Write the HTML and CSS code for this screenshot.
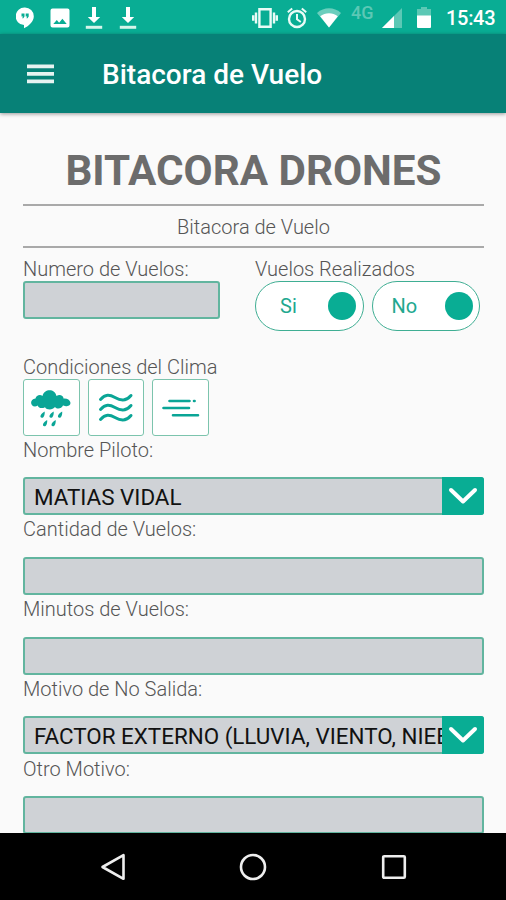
FILE: index.html
```
<!DOCTYPE html>
<html lang="es">
<head>
    <meta charset="UTF-8">
    <meta name="viewport" content="width=device-width, initial-scale=1.0">
    <title>Bitacora de Vuelo</title>
    <link rel="stylesheet" href="styles.css">
</head>
<body>
    <div class="status-bar">
        <div class="status-left">
            <svg width="18" height="22" viewBox="0 0 18 22">
                <path fill="#fff" fill-rule="evenodd" d="M9 .5a8.8 8.8 0 0 0-1 17.6v3.2c5-2.300 9.800-6.800 9.800-12A8.800 8.800 0 0 0 9 .5zM5.500 6.500h3v3L7.300 11.300H6.200l.8-1.800H5.500zM9.700 6.500h3v3l-1.200 1.800h-1.100l.8-1.800H9.700z"/>
            </svg>
            <svg width="20" height="20" viewBox="0 0 20 20">
                <path fill="#fff" fill-rule="evenodd" d="M2.500 .5h15a2 2 0 0 1 2 2v15a2 2 0 0 1-2 2h-15a2 2 0 0 1-2-2v-15a2 2 0 0 1 2-2zM3.300 16h13.400l-4.300-5.300-3.300 4-2.300-2.700z"/>
            </svg>
            <svg width="18" height="24" viewBox="0 0 18 24">
                <path fill="#fff" d="M7 1h4v10h4.200L9 17 2.800 11H7z"/>
                <path fill="#d5f5ea" d="M.8 19.800h16.400v3H.8z"/>
            </svg>
            <svg width="18" height="24" viewBox="0 0 18 24">
                <path fill="#fff" d="M7 1h4v10h4.200L9 17 2.800 11H7z"/>
                <path fill="#d5f5ea" d="M.8 19.800h16.400v3H.8z"/>
            </svg>
        </div>
        <div class="status-right">
            <svg class="vibrate" width="26" height="22" viewBox="0 0 26 22">
                <path fill="none" stroke="#e9fbf6" stroke-width="2.400" d="M7.400 2.200h11.200v17.600H7.400zM4 5.500v11M22 5.500v11M1.200 8.200v5.600M24.800 8.200v5.600"/>
            </svg>
            <svg class="alarm" width="20" height="22" viewBox="0 0 20 22">
                <circle cx="10" cy="12" r="8" fill="none" stroke="#e9fbf6" stroke-width="2.400"/>
                <path fill="none" stroke="#e9fbf6" stroke-width="2" d="M.8 5.200l4.400-3.800M19.200 5.200l-4.400-3.800M10 7v5.300l3.800 2.700"/>
            </svg>
            <svg class="wifi" width="24" height="20" viewBox="0 0 24 20">
                <path fill="#6bcebd" d="M0 5C7-1.200 17-1.200 24 5L12 19.500z"/>
                <path fill="#fff" d="M3.200 8.300c5-4.200 12.600-4.200 17.600 0L12 19.500z"/>
            </svg>
            <span class="network">4G</span>
            <svg class="signal" width="20" height="20" viewBox="0 0 20 20">
                <path fill="#5cc8b5" d="M20 0v20H0z"/>
                <path fill="#fff" d="M12 8v12H0z"/>
            </svg>
            <svg class="battery" width="14" height="21" viewBox="0 0 14 21">
                <path fill="#5cc8b5" d="M4 0h6v2h4v8H0V2h4z"/>
                <path fill="#fff" d="M0 8.500h14V20a1 1 0 0 1-1 1H1a1 1 0 0 1-1-1z"/>
            </svg>
            <span class="clock">15:43</span>
        </div>
    </div>

    <header class="app-bar">
        <svg class="menu-icon" width="27" height="20" viewBox="0 0 27 20">
            <path fill="#e6f3f1" d="M0 .5h27v3.800H0zM0 8h27v3.800H0zM0 15.500h27v3.800H0z"/>
        </svg>
        <span class="app-title">Bitacora de Vuelo</span>
    </header>

    <main class="content">
        <h1 class="main-title">BITACORA DRONES</h1>
        <p class="subtitle">Bitacora de Vuelo</p>

        <div class="flights-row">
            <div class="flights-number">
                <label class="label" for="numero">Numero de Vuelos:</label>
                <input class="input" type="text" id="numero">
            </div>
            <div class="flights-done">
                <span class="label">Vuelos Realizados</span>
                <div class="toggles">
                    <div class="toggle"><span>Si</span><i class="knob"></i></div>
                    <div class="toggle"><span>No</span><i class="knob"></i></div>
                </div>
            </div>
        </div>

        <div class="weather">
            <span class="label">Condiciones del Clima</span>
            <div class="weather-options">
                <button class="weather-button" aria-label="Lluvia">
                    <svg width="54" height="54" viewBox="0 0 54 54" fill="#0aa596">
                        <path d="M11 25.500C6 25.500 5.500 18 11.500 17.500c.5-3.500 5-4.500 7-2.500 1.500-7.500 12.500-8 14 0 3-2 7-.5 7 2.500 7-.8 9.500 6.500 4 7.500-2.500.6-4-.5-4.500-.5-1.500 3.500-6 4-8 1.500-2.500 3.500-8.500 3-10 .2-3 1.800-6.500.8-7.500-1.700-.8.700-1.500 1-2.500 1z"/>
                        <g class="drops">
                            <path id="drop" d="M20.700 30.500c.2 3-.6 6.300-2.800 6.300-2.600-.3-1.800-3.600 2.800-6.300z"/>
                            <use href="#drop" x="9"/>
                            <use href="#drop" x="17.500"/>
                            <use href="#drop" x="2.500" y="8.500"/>
                            <use href="#drop" x="11" y="8.500"/>
                        </g>
                    </svg>
                </button>
                <button class="weather-button" aria-label="Niebla">
                    <svg width="54" height="54" viewBox="0 0 54 54" fill="none" stroke="#0aa596" stroke-width="3" stroke-linecap="round">
                        <path d="M11.500 18.500c5-5.500 9-5 14.500-2 6 3.500 11 4 16-2M11.500 28.500c5-5.500 9-5 14.500-2 6 3.500 11 4 16-2M11.500 38.500c5-5.500 9-5 14.500-2 6 3.500 11 4 16-2"/>
                    </svg>
                </button>
                <button class="weather-button" aria-label="Viento">
                    <svg width="54" height="54" viewBox="0 0 54 54" fill="none" stroke="#0aa596" stroke-width="2.600" stroke-linecap="round">
                        <path d="M16.500 20h20M41 20h.6M10.500 27h25.500M20 34.200h25"/>
                    </svg>
                </button>
            </div>
        </div>

        <div class="field">
            <label class="label">Nombre Piloto:</label>
            <div class="select">
                <span class="select-value">MATIAS VIDAL</span>
                <span class="select-arrow">
                    <svg width="30" height="18" viewBox="0 0 30 18"><path fill="none" stroke="#fff" stroke-width="4" stroke-linecap="round" stroke-linejoin="round" d="M3 3l12 11.500L27 3"/></svg>
                </span>
            </div>
        </div>
        <div class="field">
            <label class="label" for="cantidad">Cantidad de Vuelos:</label>
            <input class="input" type="text" id="cantidad">
        </div>
        <div class="field">
            <label class="label" for="minutos">Minutos de Vuelos:</label>
            <input class="input" type="text" id="minutos">
        </div>
        <div class="field">
            <label class="label">Motivo de No Salida:</label>
            <div class="select">
                <span class="select-value">FACTOR EXTERNO (LLUVIA, VIENTO, NIEB</span>
                <span class="select-arrow">
                    <svg width="30" height="18" viewBox="0 0 30 18"><path fill="none" stroke="#fff" stroke-width="4" stroke-linecap="round" stroke-linejoin="round" d="M3 3l12 11.500L27 3"/></svg>
                </span>
            </div>
        </div>
        <div class="field">
            <label class="label" for="otro">Otro Motivo:</label>
            <input class="input" type="text" id="otro">
        </div>
    </main>

    <nav class="nav-bar">
        <svg width="28" height="28" viewBox="0 0 28 28"><path d="M24.500 2.200v23.600L3.500 14z"/></svg>
        <svg width="28" height="28" viewBox="0 0 28 28"><circle cx="14" cy="14" r="12"/></svg>
        <svg width="28" height="28" viewBox="0 0 28 28"><rect x="3.200" y="3.200" width="21.600" height="21.600" rx="1"/></svg>
    </nav>
</body>
</html>
```

FILE: styles.css
```
* {
    box-sizing: border-box;
}
body {
    margin: 0;
    height: 900px;
    display: flex;
    flex-direction: column;
    overflow: hidden;
    font-family: Roboto, "Liberation Sans", sans-serif;
    font-size: 20px;
    color: #555;
    background-color: #fafafa;
}
svg {
    display: block;
    flex: none;
}

/* status bar */
.status-bar {
    flex: none;
    display: flex;
    justify-content: space-between;
    height: 34px;
    padding: 0 11px 0 16px;
    background-color: #09ad94;
    color: #fff;
}
.status-left, .status-right {
    display: flex;
    align-items: center;
    height: 35px;
}
.status-left {
    gap: 15.500px;
}
.alarm {
    margin-left: 9px;
}
.wifi {
    margin-left: 10px;
}
.network {
    align-self: flex-start;
    width: 24px;
    margin: 2px 0 0 10px;
    font-size: 18px;
    line-height: 22px;
    font-weight: 500;
    color: #5cc8b5;
}
.signal {
    margin: 1px 0 0 7px;
}
.battery {
    margin-left: 15px;
}
.clock {
    width: 49px;
    margin: 1px 0 0 15px;
    font-weight: 500;
    letter-spacing: -0.3px;
    white-space: nowrap;
}

/* app bar */
.app-bar {
    flex: none;
    display: flex;
    align-items: center;
    height: 79px;
    padding: 0 27px;
    background-color: #078177;
    box-shadow: 0 1px 4px rgba(0, 0, 0, 0.4);
    color: #fff;
    z-index: 1;
}
.app-title {
    margin-left: 48px;
    padding-top: 2px;
    font-size: 28px;
    font-weight: 500;
}

/* form */
.content {
    flex: 1;
    min-height: 0;
    overflow: hidden;
    padding: 0 22px 0 23px;
}
.main-title {
    margin: 0;
    height: 91px;
    padding-top: 33px;
    font-size: 42.200px;
    line-height: 50px;
    text-align: center;
    white-space: nowrap;
    color: #6c6c6c;
}
.subtitle {
    margin: 0;
    height: 44px;
    line-height: 42px;
    font-weight: 300;
    text-align: center;
    border-top: 2px solid #a9a9a9;
    border-bottom: 2px solid #a9a9a9;
}
.label {
    display: block;
    height: 24px;
    line-height: 24px;
    font-weight: 300;
    white-space: nowrap;
}
.input, .select {
    display: block;
    width: 100%;
    height: 38px;
    border: 2px solid #62b59f;
    border-radius: 3px;
    background-color: #cfd2d6;
}
.flights-row {
    display: flex;
    gap: 35px;
    height: 107px;
    padding-top: 9px;
}
.flights-number {
    width: 197px;
}
.toggles {
    display: flex;
    gap: 8px;
}
.toggle {
    display: flex;
    align-items: center;
    justify-content: space-between;
    width: 108.500px;
    height: 50px;
    padding: 0 7px 0 24px;
    border: 1.500px solid #3fae93;
    border-radius: 25px;
    background-color: #fff;
    color: #22a88f;
}
.toggle + .toggle {
    padding: 0 6px 0 19px;
}
.knob {
    width: 28px;
    height: 28px;
    border-radius: 50%;
    background-color: #09ad94;
}
.weather {
    height: 82.500px;
}
.weather-options {
    display: flex;
    gap: 8px;
}
.weather-button {
    display: flex;
    align-items: center;
    justify-content: center;
    width: 56.500px;
    height: 57px;
    padding: 0;
    border: 1.500px solid #7cc4ad;
    border-radius: 3px;
    background-color: #fff;
}
.field {
    height: 79.750px;
}
.field .label {
    height: 39.500px;
    line-height: 25px;
}
.select {
    display: flex;
}
.select-value {
    flex: 1;
    min-width: 0;
    overflow: hidden;
    padding: 1px 0 0 9px;
    font-size: 22.400px;
    line-height: 34px;
    color: #111;
    white-space: nowrap;
}
.select-arrow {
    flex: none;
    display: flex;
    align-items: center;
    justify-content: center;
    width: 42px;
    margin: -2px -2px -2px 0;
    border-radius: 0 3px 3px 0;
    background-color: #09ad94;
}

/* navigation bar */
.nav-bar {
    flex: none;
    display: flex;
    align-items: center;
    justify-content: center;
    gap: 112.500px;
    height: 67px;
    background-color: #000;
}
.nav-bar svg {
    fill: none;
    stroke: #eee;
    stroke-width: 2.600;
    stroke-linejoin: round;
}
```
